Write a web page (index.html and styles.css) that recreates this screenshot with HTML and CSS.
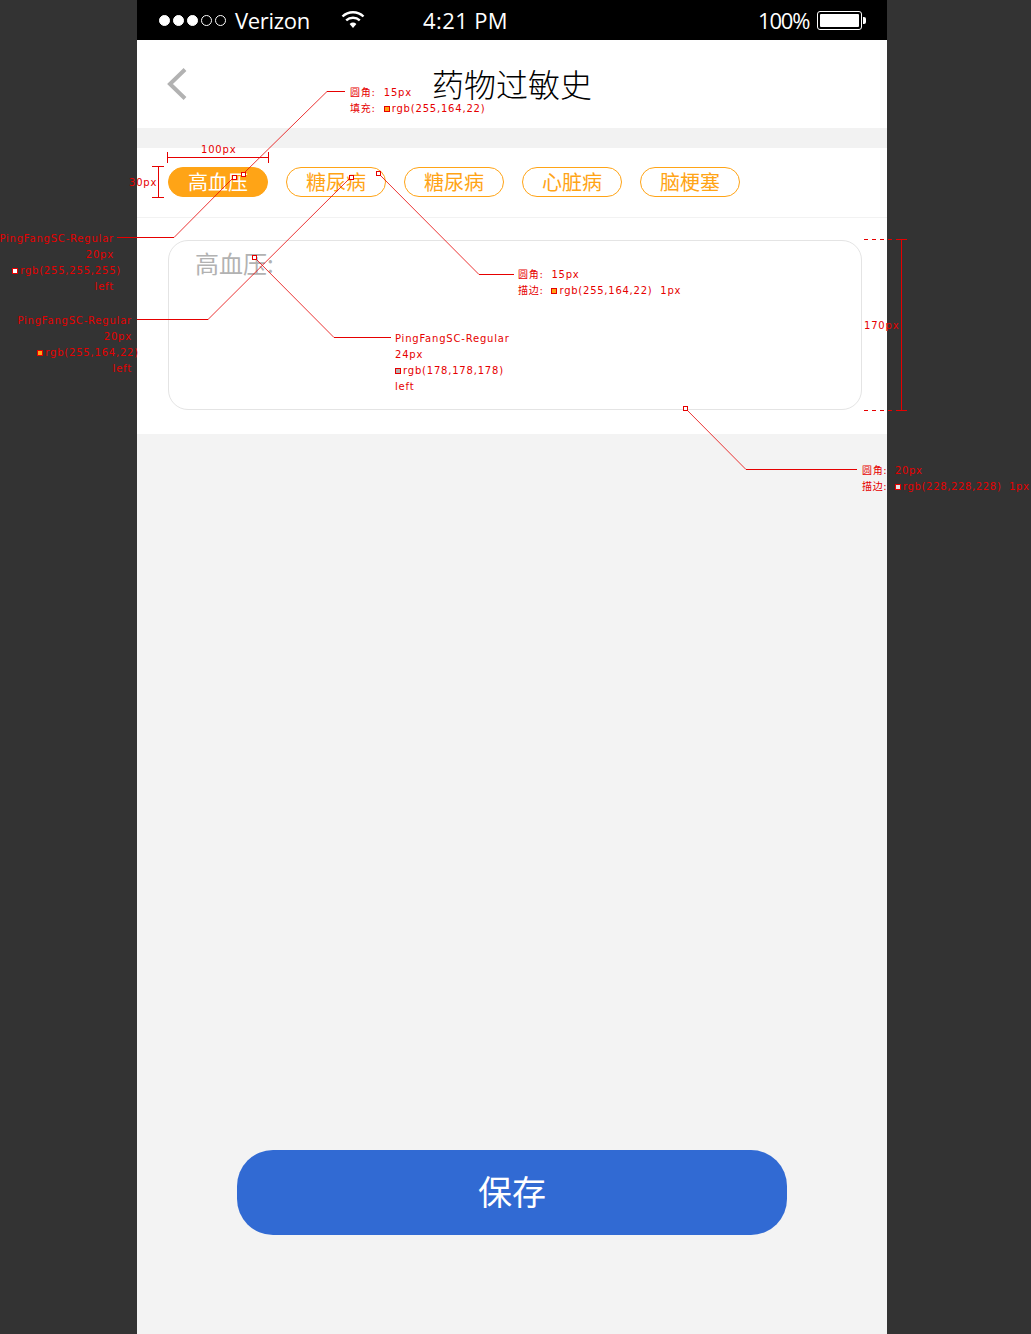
FILE: index.html
```html
<!DOCTYPE html>
<html lang="zh-CN">
<head>
	<meta charset="UTF-8">
	<meta name="viewport" content="width=device-width">
	<title>药物过敏史</title>
	<link rel="stylesheet" href="styles.css">
</head>
<body>

<div class="phone">

	<div class="status-bar">
		<div class="signal">
			<span class="dot on"></span><span class="dot on"></span><span class="dot on"></span><span class="dot"></span><span class="dot"></span>
		</div>
		<span class="carrier">Verizon</span>
		<svg class="wifi" width="24" height="19" viewBox="0 0 24 19">
			<path d="M1.5 6.5a15 15 0 0 1 21 0" fill="none" stroke="#fff" stroke-width="2.4"/>
			<path d="M5.2 10.4a10 10 0 0 1 13.6 0" fill="none" stroke="#fff" stroke-width="2.4"/>
			<path d="M8.6 14a5.2 5.2 0 0 1 6.8 0L12 18z" fill="#fff"/>
		</svg>
		<span class="time">4:21 PM</span>
		<span class="percent">100%</span>
		<div class="battery"><div class="battery-fill"></div></div>
		<div class="battery-tip"></div>
	</div>

	<div class="nav-bar">
		<svg class="back" width="20" height="34" viewBox="0 0 20 34">
			<path d="M18 2.5L3 17l15 14.500" fill="none" stroke="#b2b2b2" stroke-width="4"/>
		</svg>
		<h1 class="title">药物过敏史</h1>
	</div>

	<div class="form">
		<div class="tags">
			<span class="tag active">高血压</span>
			<span class="tag">糖尿病</span>
			<span class="tag">糖尿病</span>
			<span class="tag">心脏病</span>
			<span class="tag">脑梗塞</span>
		</div>
		<div class="input-wrap">
			<div class="input-box">高血压:</div>
		</div>
	</div>

	<div class="bottom">
		<button class="save">保存</button>
	</div>

</div>

<!-- red spec annotations on top of the design -->
<svg class="marks" width="1031" height="1334" viewBox="0 0 1031 1334">
	<g fill="none" stroke="#e60000" stroke-width="1" shape-rendering="crispEdges">
		<path d="M167.500 157.500H268.500M167.500 152V163M268.500 152V163"/>
		<path d="M152 166.500H164M152 197.500H164M158.500 166V198"/>
		<path d="M896 239.500H907M896 410.500H907M901.500 239V411"/>
		<path d="M864 239.500H892M864 410.500H892" stroke-dasharray="4 4"/>
		<path d="M327 91.500H345M174 237.500H117M208 319.500H137M479 274.500H514M334 337.500H391M746 469.500H857"/>
	</g>
	<g fill="none" stroke="#e60000" stroke-width="0.800">
		<path d="M243 174L327 91.500M234 177L174 237.500M351 177L208 319.500M378 173L479 274.500M254 257L334 337.500M685 408L746 469.500"/>
	</g>
	<g fill="#fff" stroke="#e60000" stroke-width="1" shape-rendering="crispEdges">
		<rect x="241.500" y="172.500" width="4" height="4"/>
		<rect x="232.500" y="175.500" width="4" height="4"/>
		<rect x="349.500" y="175.500" width="4" height="4"/>
		<rect x="376.500" y="171.500" width="4" height="4"/>
		<rect x="252.500" y="255.500" width="4" height="4"/>
		<rect x="683.500" y="406.500" width="4" height="4"/>
	</g>
</svg>

<div class="note note-width">100px</div>
<div class="note note-height">30px</div>
<div class="note note-card-height">170px</div>

<div class="note note-fill">
	<div>圆角:&nbsp; 15px</div>
	<div>填充:&nbsp; <i class="swatch orange"></i>rgb(255,164,22)</div>
</div>
<div class="note note-white right">
	<div>PingFangSC-Regular</div>
	<div>20px</div>
	<div class="out"><i class="swatch white"></i>rgb(255,255,255)</div>
	<div>left</div>
</div>
<div class="note note-orange right">
	<div>PingFangSC-Regular</div>
	<div>20px</div>
	<div class="out"><i class="swatch orange"></i>rgb(255,164,22)</div>
	<div>left</div>
</div>
<div class="note note-stroke">
	<div>圆角:&nbsp; 15px</div>
	<div>描边:&nbsp; <i class="swatch orange"></i>rgb(255,164,22)&nbsp; 1px</div>
</div>
<div class="note note-holder">
	<div>PingFangSC-Regular</div>
	<div>24px</div>
	<div><i class="swatch gray"></i>rgb(178,178,178)</div>
	<div>left</div>
</div>
<div class="note note-card">
	<div>圆角:&nbsp; 20px</div>
	<div>描边:&nbsp; <i class="swatch light"></i>rgb(228,228,228)&nbsp; 1px</div>
</div>

</body>
</html>
```

FILE: styles.css
```css
* { box-sizing: border-box; }

html, body {
	margin: 0;
	height: 1334px;
	overflow: hidden;
}

body {
	position: relative;
	background: #333;
	font-family: "Noto Sans CJK SC", "Open Sans", sans-serif;
}

.phone {
	display: flex;
	flex-direction: column;
	width: 750px;
	height: 1334px;
	margin-left: 137px;
	background: #f2f2f2;
}

/* status bar */
.status-bar {
	display: flex;
	align-items: center;
	height: 40px;
	padding-left: 22px;
	background: #000;
	color: #fff;
	font-family: "Open Sans", sans-serif;
	font-size: 22px;
	font-weight: 400;
	white-space: nowrap;
}

.signal {
	display: flex;
	gap: 3px;
	width: 75px;
}

.dot {
	width: 11px;
	height: 11px;
	border: 1px solid #fff;
	border-radius: 50%;
}

.dot.on { background: #fff; }

.carrier {
	width: 75px;
	margin-left: 1px;
	letter-spacing: -0.3px;
}

.wifi { margin: 0 0 1px 31px; }

.time {
	width: 84px;
	margin-left: 58px;
	letter-spacing: 0.4px;
}

.percent {
	width: 52px;
	margin-left: 251px;
	letter-spacing: -1.2px;
}

.battery {
	width: 45px;
	height: 19px;
	margin-left: 7px;
	padding: 2px;
	border: 1px solid #fff;
	border-radius: 3px;
}

.battery-fill {
	height: 100%;
	background: #fff;
	border-radius: 1px;
}

.battery-tip {
	width: 3px;
	height: 7px;
	margin-left: 1px;
	background: #fff;
	border-radius: 0 2px 2px 0;
}

/* nav */
.nav-bar {
	display: flex;
	align-items: center;
	justify-content: center;
	position: relative;
	height: 88px;
	padding-bottom: 3px;
	background: #fff;
}

.back {
	position: absolute;
	left: 30px;
	top: 27px;
}

.title {
	margin: 0;
	color: #000;
	font-size: 32px;
	font-weight: 300;
	line-height: 36px;
}

/* form */
.form {
	margin-top: 20px;
	background: #fff;
}

.tags {
	display: flex;
	gap: 18px;
	height: 70px;
	padding: 19px 0 0 31px;
	border-bottom: 1px solid #f2f2f2;
}

.tag {
	width: 100px;
	height: 30px;
	border: 1px solid #ffa416;
	border-radius: 15px;
	color: #ffa416;
	font-size: 20px;
	line-height: 28px;
	text-align: center;
}

.tag.active {
	background: #ffa416;
	color: #fff;
}

.input-wrap { padding: 22px 25px 24px 31px; }

.input-box {
	height: 170px;
	padding: 5px 26px;
	border: 1px solid #e4e4e4;
	border-radius: 20px;
	color: #b2b2b2;
	font-size: 24px;
	line-height: 34px;
}

.bottom {
	display: flex;
	flex: 1;
	align-items: flex-end;
	justify-content: center;
	padding-bottom: 99px;
	background: #f3f3f3;
}

.save {
	width: 550px;
	height: 85px;
	padding: 0 0 4px;
	border: 0;
	border-radius: 36px;
	background: #316ad3;
	color: #fff;
	font-family: inherit;
	font-size: 34px;
}

/* annotations */
.marks {
	position: absolute;
	left: 0;
	top: 0;
}

.note {
	position: absolute;
	display: flex;
	flex-direction: column;
	gap: 4px;
	color: #e60000;
	font-family: "DejaVu Sans", "Noto Sans CJK SC", sans-serif;
	font-size: 10px;
	letter-spacing: 0.8px;
	line-height: 12px;
	white-space: nowrap;
}

.note.right { text-align: right; }

.note .out { margin-right: -7px; }

.swatch {
	display: inline-block;
	width: 6px;
	height: 6px;
	margin-right: 2px;
	border: 1px solid #e60000;
}

.swatch.orange { background: #ffa416; }
.swatch.white { background: #fff; }
.swatch.gray { background: #b2b2b2; }
.swatch.light { background: #e4e4e4; }

.note-width { left: 201px; top: 144px; }
.note-height { left: 129px; top: 177px; }
.note-card-height { left: 864px; top: 320px; }
.note-fill { left: 350px; top: 87px; }
.note-white { right: 917px; top: 233px; }
.note-orange { right: 899px; top: 315px; }
.note-stroke { left: 518px; top: 269px; letter-spacing: 0.75px; }
.note-holder { left: 395px; top: 333px; }
.note-card { left: 862px; top: 465px; letter-spacing: 0.65px; }
```
